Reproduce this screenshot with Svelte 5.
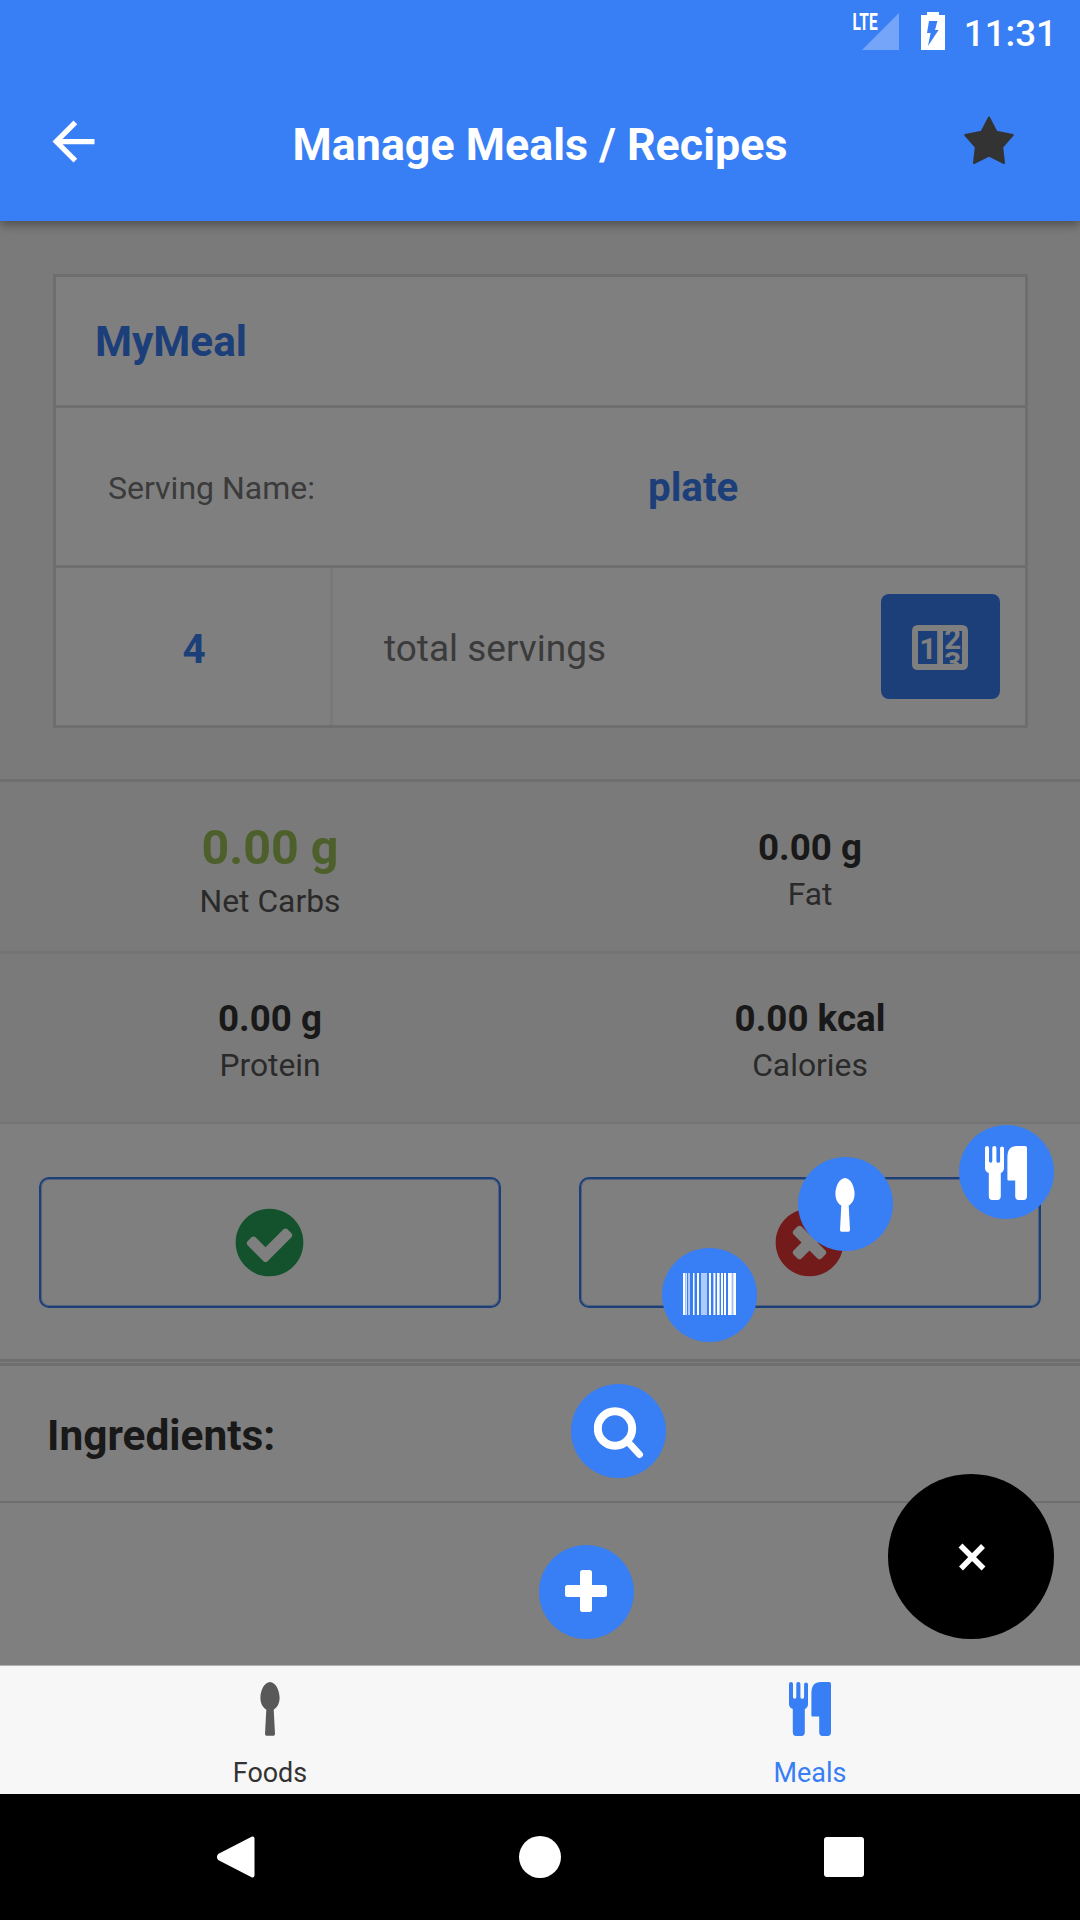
<script>
  let mealName = 'MyMeal'
  let servingName = 'plate'
  let servings = 4

  const stats = [
    [
      { label: 'Net Carbs', value: '0.00 g', main: true },
      { label: 'Fat', value: '0.00 g' }
    ],
    [
      { label: 'Protein', value: '0.00 g' },
      { label: 'Calories', value: '0.00 kcal' }
    ]
  ]

  // x, width, opacity
  const bars = [
    [0, 2, 1], [2, 1, 0.5], [3, 1, 0.8], [5, 2, 0.6], [10, 1, 1], [11, 1, 0.5],
    [14, 2, 1], [18, 6, 0.6], [26, 2, 1], [30, 1, 0.6], [31, 1, 1], [32, 1, 0.4],
    [34, 2, 1], [36, 1, 0.6], [38, 2, 1], [41, 2, 1], [45, 3, 1], [48, 1, 0.8],
    [49, 1, 0.5], [50, 1, 0.8], [51, 2, 1]
  ]
</script>

{#snippet spoon()}
  <svg width="20" height="54" viewBox="0 0 20 54" fill="currentColor">
    <path d="M10 0C15.4 0 19.6 8.4 19.6 15.8C19.6 21.2 17.4 25.6 13.7 27.6L15 52Q15 53.8 13.4 53.8H6.6Q5 53.8 5 52L6.3 27.6C2.6 25.6.4 21.2.4 15.8C.4 8.4 4.6 0 10 0z" />
  </svg>
{/snippet}

{#snippet cutlery()}
  <svg width="42" height="54" viewBox="0 0 42 54" fill="currentColor">
    <path d="M0 2a2 2 0 0 1 4 0V15a1.6 1.6 0 0 0 3.3 0V2a2 2 0 0 1 4.1 0V15a1.6 1.6 0 0 0 3.7 0V2a2 2 0 0 1 3.9 0V22Q19 25.5 15.8 27V50Q15.8 54 12.4 54H7.2Q3.8 54 3.8 50V27Q0 25.5 0 22z" />
    <path d="M22.4 11Q22.4 0 32 0H40Q42 0 42 2V50Q42 54 38.6 54H33.6Q30.2 54 30.2 50V34.6H23.4Q22.4 34.6 22.4 33.6z" />
  </svg>
{/snippet}

<div class="screen">
  <div class="status">
    <svg class="signal" width="46" height="40" viewBox="0 0 46 40">
      <path d="M9 37H46V0z" fill="#fff" fill-opacity=".3" />
      <text x="-0.4" y="17" textLength="25" lengthAdjust="spacingAndGlyphs" class="lte">LTE</text>
    </svg>
    <svg class="battery" width="24" height="38" viewBox="0 0 24 38">
      <path fill-rule="evenodd" fill="#fff" d="M6 0H18V3H24V38H0V3H6zM8 9L6 21H9.6L7 34L17.6 18H14L16.4 9z" />
    </svg>
    <span class="clock">11:31</span>
  </div>

  <header>
    <svg class="back" width="63" height="63" viewBox="0 0 24 24" fill="#fff">
      <path d="M20 11H7.83l5.59-5.59L12 4l-8 8 8 8 1.41-1.41L7.83 13H20v-2z" />
    </svg>
    <h1>Manage Meals / Recipes</h1>
    <svg class="star" width="50" height="49" viewBox="0 0 50 49">
      <path d="M25 1.5L32.4 15.8L48.7 19L38.2 31.2L40 47L25 39.6L10 47L11.8 31.2L1.3 19L17.6 15.8z" fill="#333" stroke="#333" stroke-width="2" stroke-linejoin="round" />
    </svg>
  </header>

  <main>
    <section class="card">
      <div class="row name">{mealName}</div>
      <div class="row serving">
        <label for="serving">Serving Name:</label>
        <b id="serving">{servingName}</b>
      </div>
      <div class="row total">
        <b>{servings}</b>
        <span>total servings</span>
        <button class="counter" aria-label="Servings">
          <svg width="56" height="45" viewBox="0 0 56 45">
            <path fill="#fff" fill-rule="evenodd" d="M6 0H50Q56 0 56 6V39Q56 45 50 45H6Q0 45 0 39V6Q0 0 6 0zM6 6V39H25.2V6zM31 6V39H50V6z" />
            <clipPath id="wheel"><rect x="6" y="6" width="44" height="33.5" /></clipPath>
            <g clip-path="url(#wheel)" class="digits">
              <text x="7.4" y="33.5">1</text>
              <text x="32.2" y="24.1">2</text>
              <text x="32.2" y="48.4">3</text>
            </g>
          </svg>
        </button>
      </div>
    </section>

    <section class="stats">
      {#each stats as row}
        <div class="statRow">
          {#each row as s}
            <div class="stat" class:main={s.main}>
              <b>{s.value}</b>
              <span>{s.label}</span>
            </div>
          {/each}
        </div>
      {/each}
    </section>

    <section class="actions">
      <button aria-label="Save">
        <svg width="79" height="79" viewBox="0 0 1792 1792" fill="#28a55a">
          <path d="M1412 734q0-28-18-46l-91-90q-19-19-45-19t-45 19l-408 407-226-226q-19-19-45-19t-45 19l-91 90q-18 18-18 46 0 27 18 45l362 362q19 19 45 19 27 0 46-19l543-543q18-18 18-45zm252 162q0 209-103 385.5t-279.5 279.5-385.5 103-385.5-103-279.5-279.5-103-385.5 103-385.5 279.5-279.5 385.5-103 385.5 103 279.5 279.5 103 385.5z" />
        </svg>
      </button>
      <button aria-label="Cancel">
        <svg width="79" height="79" viewBox="0 0 1792 1792" fill="#e63434">
          <path d="M1277 1122q0-26-19-45l-181-181 181-181q19-19 19-45 0-27-19-46l-90-90q-19-19-46-19-26 0-45 19l-181 181-181-181q-19-19-45-19-27 0-46 19l-90 90q-19 19-19 46 0 26 19 45l181 181-181 181q-19 19-19 45 0 27 19 46l90 90q19 19 46 19 26 0 45-19l181-181 181 181q19 19 45 19 27 0 46-19l90-90q19-19 19-46zm387-226q0 209-103 385.5t-279.5 279.5-385.5 103-385.5-103-279.5-279.5-103-385.5 103-385.5 279.5-279.5 385.5-103 385.5 103 279.5 279.5 103 385.5z" />
        </svg>
      </button>
    </section>

    <h2>Ingredients:</h2>

    <!-- dims the page while the menu is open -->
    <div class="backdrop"></div>
  </main>

  <div class="fab cutleryFab">{@render cutlery()}</div>
  <div class="fab spoonFab">{@render spoon()}</div>
  <div class="fab barcodeFab">
    <svg width="53" height="42" viewBox="0 0 53 42" fill="#fff">
      {#each bars as [x, w, o]}
        <rect {x} y="0" width={w} height="42" fill-opacity={o} />
      {/each}
    </svg>
  </div>
  <div class="fab searchFab">
    <svg width="50" height="52" viewBox="0 0 50 52" fill="none" stroke="#fff" stroke-width="8">
      <circle cx="21" cy="21.5" r="17.2" />
      <path d="M34 35L45.5 47.5" stroke-width="7" stroke-linecap="round" />
    </svg>
  </div>
  <div class="fab plusFab">
    <svg width="42" height="42" viewBox="0 0 42 42" fill="#fff">
      <rect x="15" y="0" width="12" height="42" rx="2.5" />
      <rect x="0" y="15" width="42" height="12" rx="2.5" />
    </svg>
  </div>
  <div class="fab closeFab">
    <svg width="28" height="28" viewBox="0 0 28 28" stroke="#fff" stroke-width="5.5">
      <path d="M2.5 2.5L25.5 25.5M25 3L3 25.5" />
    </svg>
  </div>

  <nav class="tabs">
    <div class="tab"><i>{@render spoon()}</i><span>Foods</span></div>
    <div class="tab active"><i>{@render cutlery()}</i><span>Meals</span></div>
  </nav>

  <div class="sysnav">
    <svg width="38" height="42" viewBox="0 0 38 42">
      <path d="M35.5 2.5V39.5L2.5 22.5Q1.5 21 2.5 19.5z" fill="#fff" stroke="#fff" stroke-width="4" stroke-linejoin="round" />
    </svg>
    <span class="home"></span>
    <span class="recent"></span>
  </div>
</div>

<style>
:global(body) {
  margin: 0;
  background: #fff;
}

.screen {
  position: relative;
  display: flex;
  flex-direction: column;
  width: 1080px;
  height: 1920px;
  overflow: hidden;
  font-family: Roboto, sans-serif;
  color: #333;
}

svg {
  display: block;
  flex: none;
}

button {
  padding: 0;
  box-sizing: border-box;
  display: flex;
  align-items: center;
  justify-content: center;
  font-family: inherit;
}

.status {
  position: relative;
  z-index: 2;
  display: flex;
  box-sizing: border-box;
  height: 63px;
  padding-right: 23px;
  justify-content: flex-end;
  align-items: flex-start;
  background: #387ef5;
  color: #fff;
}

.status .signal {
  margin-top: 13px;
  overflow: visible;
}

.status .battery {
  margin: 12px 19px 0 22px;
}

.lte {
  font-size: 23px;
  font-weight: 700;
  fill: #fff;
}

.clock {
  font-size: 36.75px;
  font-weight: 500;
  line-height: 67px;
}

header {
  position: relative;
  z-index: 1;
  display: flex;
  align-items: center;
  box-sizing: border-box;
  height: 158px;
  padding: 0 66px 0 42px;
  background: #387ef5;
  color: #fff;
  box-shadow: 0 3px 10px rgba(0, 0, 0, 0.4);
}

.back {
  margin-top: -2px;
}

.star {
  margin-top: -4px;
}

h1 {
  flex: 1;
  margin: 0;
  padding: 4px 0 0 11px;
  text-align: center;
  font-size: 44.8px;
  font-weight: 700;
}

main {
  position: relative;
  height: 1444px;
  background: #fff;
}

.backdrop {
  position: absolute;
  inset: 0;
  background: rgba(0, 0, 0, 0.5);
}

.card {
  padding: 53px 52px 51px 53px;
  background: #f5f5f5;
}

.row {
  display: flex;
  align-items: center;
  box-sizing: border-box;
  border: 3px solid #ddd;
  background: #fff;
}

.row + .row {
  border-top: 0;
}

.name {
  height: 134px;
  padding-left: 39px;
  color: #387ef5;
  font-size: 42.3px;
  font-weight: 700;
}

.serving {
  height: 160px;
}

.serving label {
  width: 538px;
  box-sizing: border-box;
  padding: 3px 0 0 52px;
  font-size: 32px;
  color: #767676;
}

.row b {
  color: #387ef5;
  font-size: 40.3px;
}

.serving b {
  padding: 2px 0 0 54px;
}

.total {
  height: 160px;
}

.total b {
  display: flex;
  align-items: center;
  justify-content: center;
  box-sizing: border-box;
  width: 277px;
  height: 100%;
  padding: 5px 0 0 2px;
  border-right: 3px solid #f3f3f3;
}

.total span {
  flex: 1;
  padding: 4px 0 0 51px;
  font-size: 37px;
  color: #767676;
}

.counter {
  width: 119px;
  height: 105px;
  margin-right: 25px;
  padding: 1px 1px 0 0;
  border: 0;
  border-radius: 8px;
  background: #387ef5;
}

.digits {
  font-size: 29.5px;
  font-weight: 700;
  fill: #fff;
}

.stats {
  border-top: 3px solid #ddd;
  background: #f5f5f5;
}

.statRow {
  display: flex;
  box-sizing: border-box;
  height: 172px;
  border-bottom: 3px solid #e8e8e8;
}

.statRow + .statRow {
  height: 170px;
  border-bottom-width: 2px;
}

.stat {
  flex: 1;
  display: flex;
  flex-direction: column;
  align-items: center;
  padding-top: 42px;
}

.statRow + .statRow .stat {
  padding-top: 41px;
}

.stat b {
  font-size: 36.75px;
  line-height: 47px;
}

.stat.main b {
  font-size: 48.4px;
  line-height: 56px;
  color: #9abe54;
}

.stat.main {
  padding-top: 38px;
}

.stat span {
  font-size: 31.8px;
  line-height: 47px;
  color: #555;
}

.stat.main span {
  line-height: 50px;
}

.actions {
  display: flex;
  gap: 78px;
  box-sizing: border-box;
  height: 238px;
  padding: 53px 39px;
  border-bottom: 3px solid #ddd;
}

.actions button {
  flex: 1;
  height: 131px;
  padding-right: 1px;
  border: 2.6px solid #387ef5;
  box-shadow: inset 0 0 0 1px rgba(56, 126, 245, 0.45);
  border-radius: 10px;
  background: none;
}

h2 {
  display: flex;
  align-items: center;
  box-sizing: border-box;
  height: 140px;
  margin: 1px 0 0;
  padding: 4px 0 0 47px;
  border-top: 3px solid #ddd;
  border-bottom: 2px solid #ddd;
  font-size: 42.4px;
}

.fab {
  position: absolute;
  z-index: 2;
  display: flex;
  align-items: center;
  justify-content: center;
  box-sizing: border-box;
  width: 95px;
  height: 94px;
  border-radius: 50%;
  background: #387ef5;
  color: #fff;
}

.cutleryFab {
  left: 959px;
  top: 1125px;
  padding: 2px 1px 0 0;
}

.spoonFab {
  left: 798px;
  top: 1157px;
  padding: 2px 1px 0 0;
}

.barcodeFab {
  left: 662px;
  top: 1248px;
  padding-bottom: 2px;
}

.searchFab {
  left: 571px;
  top: 1384px;
  padding-top: 4px;
}

.plusFab {
  left: 539px;
  top: 1545px;
  padding: 0 2px 2px 0;
}

.closeFab {
  left: 888px;
  top: 1474px;
  width: 166px;
  height: 165px;
  padding: 1px 0 0 2px;
  background: #000;
}

.tabs {
  display: flex;
  box-sizing: border-box;
  height: 129px;
  border-top: 1px solid #b2b2b2;
  background: #f7f7f7;
}

.tab {
  flex: 1;
  display: flex;
  flex-direction: column;
  align-items: center;
  padding-top: 16px;
}

.tab i {
  color: #595959;
}

.tab span {
  margin-top: 21px;
  font-size: 26.9px;
  line-height: 32px;
}

.tab.active,
.tab.active i {
  color: #387ef5;
}

.sysnav {
  display: flex;
  align-items: center;
  justify-content: space-between;
  box-sizing: border-box;
  height: 126px;
  padding: 0 216px 0 217px;
  background: #000;
}

.home {
  width: 42px;
  height: 42px;
  border-radius: 50%;
  background: #fff;
}

.recent {
  width: 40px;
  height: 40px;
  border-radius: 3px;
  background: #fff;
}
</style>
